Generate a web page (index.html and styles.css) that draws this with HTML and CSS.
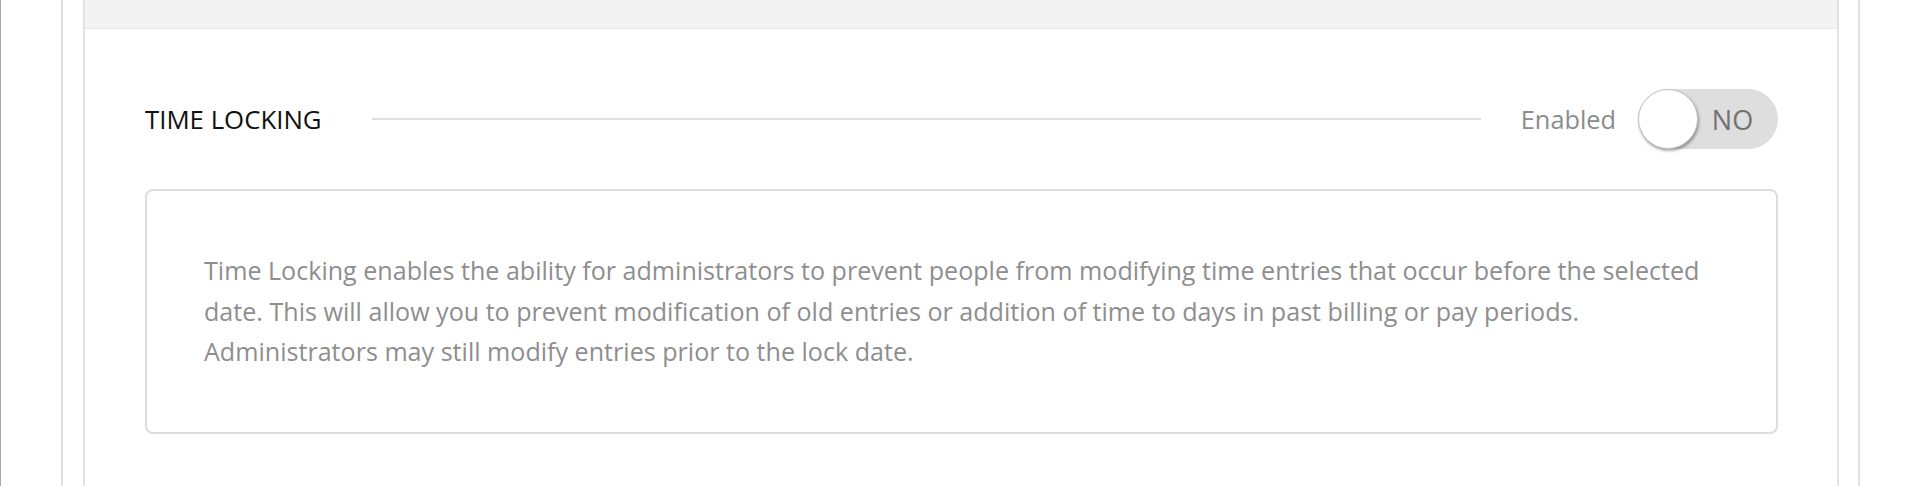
FILE: index.html
```html
<!DOCTYPE html>
<html lang="en">
<head>
  <meta charset="UTF-8" />
  <meta name="viewport" content="width=device-width, initial-scale=1.0" />
  <title>Settings - Time Locking</title>
  <link rel="stylesheet" href="styles.css">
</head>
<body>
  <div class="panel">
    <div class="card">
      <div class="card-header"></div>

      <div class="section-row">
        <h2 class="section-title">TIME LOCKING</h2>
        <div class="section-rule"></div>
        <span class="toggle-label">Enabled</span>
        <button class="toggle" type="button" onclick="this.classList.toggle('on')">
          <span class="knob"></span>
          <span class="toggle-text">NO</span>
        </button>
      </div>

      <div class="info-box">
        <p>Time Locking enables the ability for administrators to prevent people from modifying time entries that occur before the selected date. This will allow you to prevent modification of old entries or addition of time to days in past billing or pay periods. Administrators may still modify entries prior to the lock date.</p>
      </div>
    </div>
  </div>
</body>
</html>
```

FILE: styles.css
```css
* {
  margin: 0;
  padding: 0;
  box-sizing: border-box;
}
body {
  font-family: 'Open Sans', sans-serif;
  background: #ffffff;
  border-left: 1px solid #a8a8a8;
  min-height: 486px;
  overflow: hidden;
}
.panel {
  margin: 0 60px;
  min-height: 486px;
  border-left: 2px solid #e0e0e0;
  border-right: 2px solid #e0e0e0;
  padding: 0 19px 0 20px;
}
.card {
  min-height: 486px;
  border-left: 2px solid #e2e2e2;
  border-right: 2px solid #e2e2e2;
  padding: 0 59px 40px 60px;
}
.card-header {
  height: 29px;
  margin: 0 -59px 60px -60px;
  background: #f3f3f3;
  border-bottom: 1px solid #e6e6e6;
}
.section-row {
  display: flex;
  align-items: center;
  height: 60px;
}
.section-title {
  font-size: 25.8px;
  font-weight: 400;
  color: #111111;
  margin-right: 50px;
}
.section-rule {
  flex: 1;
  height: 2px;
  background: #dedede;
  margin-right: 40px;
}
.toggle-label {
  font-size: 25.3px;
  color: #8c8c8c;
  margin-right: 22px;
}
.toggle {
  position: relative;
  width: 140px;
  height: 60px;
  border: none;
  border-radius: 30px;
  background: #dedede;
  cursor: pointer;
  font-family: inherit;
}
.knob {
  position: absolute;
  left: 0;
  top: 0;
  width: 60px;
  height: 60px;
  border-radius: 50%;
  background: #ffffff;
  border: 1px solid #c4c4c4;
  box-shadow: 1px 2px 3px rgba(0, 0, 0, 0.35);
}
.toggle-text {
  display: block;
  padding-left: 49px;
  font-size: 27px;
  color: #727272;
}
.info-box {
  margin-top: 40px;
  border: 2px solid #dddddd;
  border-radius: 8px;
  padding: 59px 58px 60px 57px;
}
.info-box p {
  font-size: 25.1px;
  line-height: 40.5px;
  color: #8e8e8e;
}
```
